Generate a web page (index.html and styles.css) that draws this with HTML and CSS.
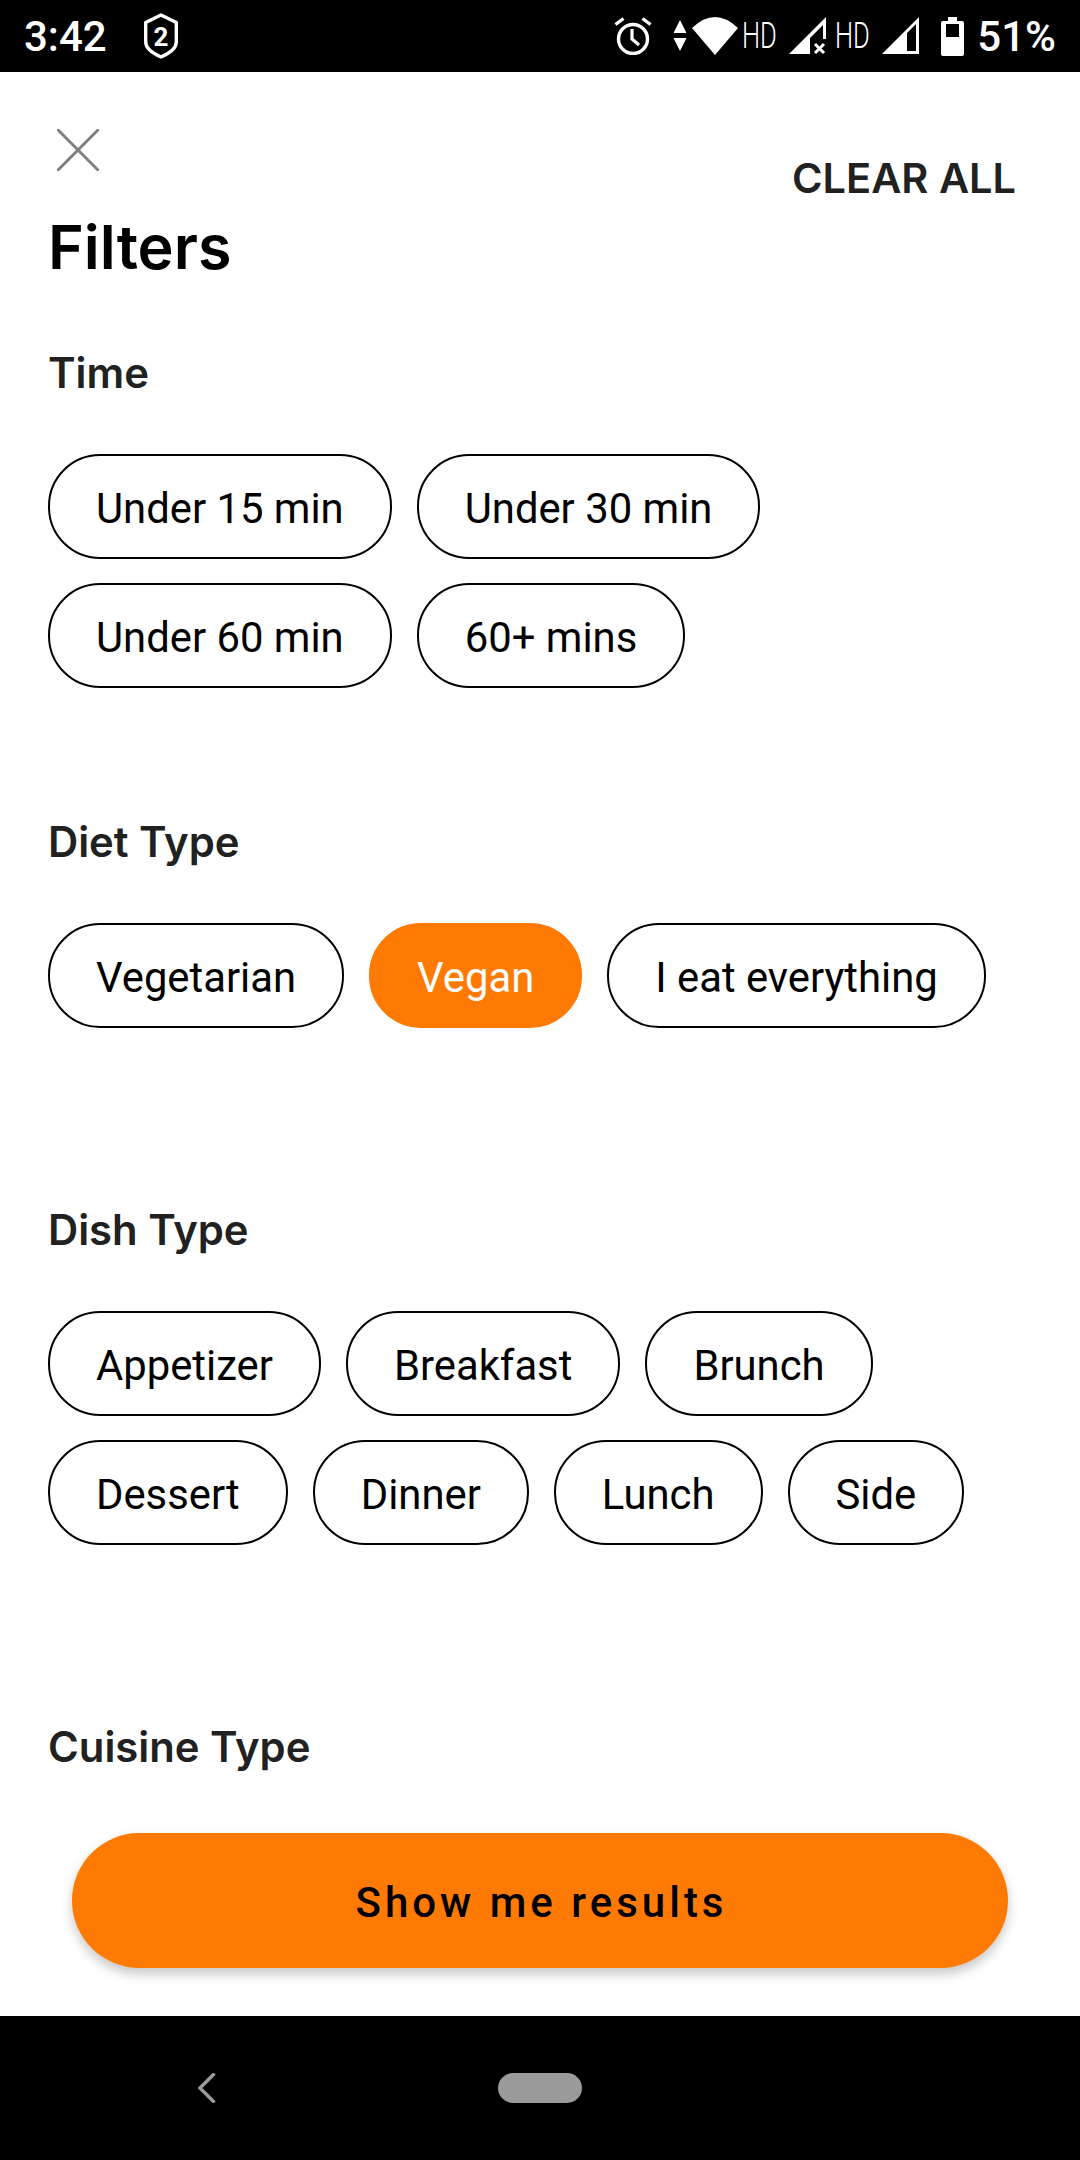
FILE: index.html
```html
<!DOCTYPE html>
<html lang="en">
<head>
    <meta charset="UTF-8">
    <meta name="viewport" content="width=device-width, initial-scale=1.0">
    <title>Filters</title>
    <link rel="stylesheet" href="styles.css">
</head>
<body>
    <div class="screen">
        <div class="status-bar">
            <span class="clock">3:42</span>
            <svg class="shield" width="36" height="46" viewBox="0 0 36 46">
                <path d="M18 2 L33.3 9.5 V29 C33.3 35 26 40.5 18 44 C10 40.5 2.7 35 2.7 29 V9.5 Z" fill="none" stroke="#fff" stroke-width="3.4" stroke-linejoin="round"/>
                <text x="18" y="33" text-anchor="middle" class="shield-num">2</text>
            </svg>
            <div class="status-right">
                <svg class="ico-alarm" width="38" height="38" viewBox="0 0 38 38">
                    <circle cx="19" cy="22" r="14.5" fill="none" stroke="#fff" stroke-width="3.4"/>
                    <path d="M18 12 V22 L25 28" fill="none" stroke="#fff" stroke-width="3.2"/>
                    <path d="M1.5 7.5 L9.5 1.5 M36.5 7.5 L28.5 1.5" fill="none" stroke="#fff" stroke-width="3.4"/>
                </svg>
                <svg class="ico-arrows" width="14" height="32" viewBox="0 0 14 32">
                    <path d="M7 0 L13.5 13 H0.5 Z M0.5 18 H13.5 L7 31 Z" fill="#fff"/>
                </svg>
                <svg class="ico-wifi" width="46" height="38" viewBox="0 0 46 38">
                    <path d="M0 11 Q23 -11 46 11 L23 38 Z" fill="#fff"/>
                </svg>
                <span class="hd hd-first">HD</span>
                <svg class="ico-signal" width="38" height="38" viewBox="0 0 38 38">
                    <path d="M0 37 L37 0 V22 H34 V8 L21 21 V37 Z" fill="#fff"/>
                    <path d="M26 27 L35 36 M35 27 L26 36" fill="none" stroke="#fff" stroke-width="3"/>
                </svg>
                <span class="hd hd-second">HD</span>
                <svg class="ico-signal-two" width="38" height="38" viewBox="0 0 38 38">
                    <path d="M0 37 L37 0 V37 Z M25 34 H34 V7 L25 16 Z" fill="#fff" fill-rule="evenodd"/>
                </svg>
                <svg class="ico-battery" width="24" height="39" viewBox="0 0 24 39">
                    <path d="M7 0 H16 V4 H21 Q23 4 23 6 V37 Q23 39 21 39 H2 Q0 39 0 37 V6 Q0 4 2 4 H7 Z" fill="#fff"/>
                    <rect x="5" y="7" width="13" height="13" fill="#000"/>
                </svg>
                <span class="percent">51%</span>
            </div>
        </div>

        <div class="content">
            <div class="top-row">
                <svg class="close-icon" width="42" height="42" viewBox="0 0 42 42">
                    <path d="M1 1 L41 41 M41 1 L1 41" fill="none" stroke="#808080" stroke-width="3" stroke-linecap="round"/>
                </svg>
                <span class="clear-all">CLEAR ALL</span>
            </div>
            <h1>Filters</h1>

            <section class="filter-group group-time">
                <h2>Time</h2>
                <div class="chips">
                    <span class="chip">Under 15 min</span>
                    <span class="chip">Under 30 min</span>
                    <span class="chip">Under 60 min</span>
                    <span class="chip">60+ mins</span>
                </div>
            </section>

            <section class="filter-group group-diet">
                <h2>Diet Type</h2>
                <div class="chips">
                    <span class="chip">Vegetarian</span>
                    <span class="chip selected">Vegan</span>
                    <span class="chip">I eat everything</span>
                </div>
            </section>

            <section class="filter-group group-dish">
                <h2>Dish Type</h2>
                <div class="chips">
                    <span class="chip">Appetizer</span>
                    <span class="chip">Breakfast</span>
                    <span class="chip">Brunch</span>
                    <span class="chip">Dessert</span>
                    <span class="chip">Dinner</span>
                    <span class="chip">Lunch</span>
                    <span class="chip">Side</span>
                </div>
            </section>

            <section class="filter-group group-cuisine">
                <h2>Cuisine Type</h2>
            </section>

            <button class="results-btn">Show me results</button>
        </div>

        <div class="nav-bar">
            <svg class="nav-back" width="18" height="30" viewBox="0 0 18 30">
                <path d="M16.5 0.5 L2 15 L16.5 29.5" fill="none" stroke="#9a9a9a" stroke-width="3.4"/>
            </svg>
            <span class="nav-home"></span>
        </div>
    </div>
</body>
</html>
```

FILE: styles.css
```css
* {
    box-sizing: border-box;
}

body {
    margin: 0;
    background-color: #fff;
    font-family: Roboto, "Liberation Sans", sans-serif;
}

.screen {
    width: 1080px;
    height: 2160px;
    display: flex;
    flex-direction: column;
    overflow: hidden;
}

/* status bar */
.status-bar {
    height: 72px;
    flex-shrink: 0;
    background-color: #000;
    color: #fff;
    display: flex;
    align-items: center;
    padding: 0 24px;
}

.clock {
    font-size: 42px;
    font-weight: 500;
    width: 119px;
}

.shield-num {
    font-family: Roboto, sans-serif;
    font-size: 26px;
    font-weight: 700;
    fill: #fff;
}

.status-right {
    margin-left: auto;
    display: flex;
    align-items: center;
}

.hd {
    font-size: 36px;
    font-weight: 300;
    display: inline-block;
    width: 35px;
    white-space: nowrap;
    transform: scaleX(0.71);
    transform-origin: left center;
}

.ico-arrows { margin-left: 21px; }
.ico-wifi { margin-left: 5px; }
.hd-first { margin-left: 4px; }
.ico-signal { margin-left: 12px; }
.hd-second { margin-left: 8px; }
.ico-signal-two { margin-left: 12px; }
.ico-battery { margin-left: 21px; }

.percent {
    margin-left: 12px;
    font-size: 42px;
    font-weight: 500;
}

/* content */
.content {
    flex: 1;
    position: relative;
    overflow: hidden;
    padding: 0 48px;
    background-color: #fff;
}

.top-row {
    display: flex;
    justify-content: space-between;
    align-items: flex-start;
    padding: 57px 16px 0 9px;
}

.clear-all {
    margin-top: 24px;
    font-family: Inter, sans-serif;
    font-size: 41.5px;
    font-weight: 600;
    color: #212121;
}

h1 {
    margin: 8px 0 0;
    font-family: Inter, sans-serif;
    font-size: 61px;
    font-weight: 600;
    line-height: 72px;
    color: #000;
}

h2 {
    margin: 0;
    font-family: Inter, sans-serif;
    font-size: 41.8px;
    font-weight: 600;
    line-height: 48px;
    color: #212121;
}

.group-time { margin-top: 66px; }
.group-diet { margin-top: 130px; }
.group-dish { margin-top: 178px; }
.group-cuisine { margin-top: 178px; }

.chips {
    margin-top: 57px;
    display: flex;
    flex-wrap: wrap;
    gap: 24px 25px;
}

.chip {
    height: 105px;
    padding: 4px 46px 0;
    display: flex;
    align-items: center;
    border: 2px solid #000;
    border-radius: 52px;
    font-size: 41.8px;
    color: #000;
    white-space: nowrap;
}

.chip.selected {
    background-color: #ff7a03;
    border-color: #ff7a03;
    color: #fff;
}

.results-btn {
    position: absolute;
    left: 72px;
    bottom: 48px;
    width: 936px;
    height: 135px;
    padding: 4px 0 0 3px;
    border: none;
    border-radius: 68px;
    background-color: #ff7a03;
    box-shadow: 0 6px 12px rgba(0, 0, 0, 0.22);
    color: #000;
    font-family: Roboto, sans-serif;
    font-size: 42px;
    font-weight: 500;
    letter-spacing: 4px;
}

/* nav bar */
.nav-bar {
    height: 144px;
    flex-shrink: 0;
    background-color: #000;
    position: relative;
    display: flex;
    justify-content: center;
    align-items: center;
}

.nav-back {
    position: absolute;
    left: 198px;
    top: 57px;
}

.nav-home {
    width: 84px;
    height: 30px;
    border-radius: 15px;
    background-color: #9a9a9a;
}
```
